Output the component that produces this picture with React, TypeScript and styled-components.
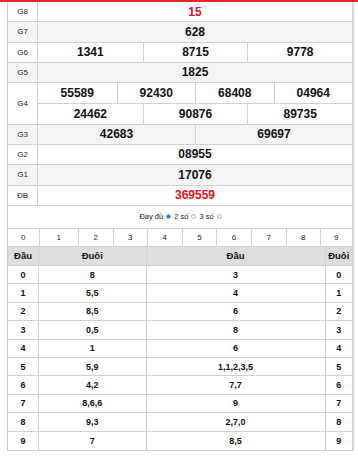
import React from "react";
import styled, { createGlobalStyle } from "styled-components";

const Global = createGlobalStyle`
  html, body { margin: 0; padding: 0; background: #fff; }
  body { font-family: "Liberation Sans", Arial, sans-serif; color: #111; }
`;

const TopBar = styled.div`
  height: 2px;
  background: #e8232a;
`;

const Box = styled.div`
  margin-left: 7px;
  width: 346px;
  box-sizing: border-box;
  border-left: 1px solid #cfcfcf;
  border-right: 1px solid #cfcfcf;
  border-bottom: 1px solid #cfcfcf;
  box-shadow: 1px 1px 2px rgba(0, 0, 0, 0.18);
`;

const PrizeRow = styled.div<{ $grey?: boolean; $h: number }>`
  display: grid;
  grid-template-columns: 30px 1fr;
  background: ${(p) => (p.$grey ? "#f4f4f4" : "#fff")};
  border-bottom: 1px solid #d2d2d2;
  height: ${(p) => p.$h}px;
  box-sizing: border-box;
`;

const Label = styled.div`
  display: flex;
  align-items: center;
  justify-content: center;
  border-right: 1px solid #d2d2d2;
  font-size: 8px;
  color: #222;
`;

const Lines = styled.div`
  display: flex;
  flex-direction: column;
`;

const Line = styled.div<{ $n: number; $top?: boolean }>`
  flex: 1;
  display: grid;
  grid-template-columns: repeat(${(p) => p.$n}, 1fr);
  border-top: ${(p) => (p.$top ? "1px solid #d2d2d2" : "none")};
`;

const Num = styled.div<{ $red?: boolean }>`
  display: flex;
  align-items: center;
  justify-content: center;
  font-size: 12px;
  font-weight: bold;
  color: ${(p) => (p.$red ? "#e8101c" : "#111")};
  & + & { border-left: 1px solid #d2d2d2; }
`;

const RadioRow = styled.div`
  height: 23px;
  display: flex;
  align-items: center;
  justify-content: center;
  font-size: 7.5px;
  color: #222;
  gap: 2px;
  padding-left: 2px;
  box-sizing: border-box;
  border-bottom: 1px solid #d2d2d2;
`;

const Radio = styled.span<{ $on?: boolean }>`
  display: inline-block;
  width: 5px;
  height: 5px;
  border-radius: 50%;
  box-sizing: border-box;
  border: 1px solid ${(p) => (p.$on ? "#7fb2ef" : "#aaa")};
  background: ${(p) => (p.$on ? "#1a73e8" : "#fff")};
  margin: 0 1px;
`;

const DigitRow = styled.div`
  display: grid;
  grid-template-columns: 30.7px 39px 35px 34px 35px 34.6px 34.4px 35px 34px 1fr;
  height: 18px;
  box-sizing: border-box;
  border-bottom: 1px solid #d2d2d2;
`;

const Digit = styled.div`
  display: flex;
  align-items: center;
  justify-content: center;
  font-size: 8px;
  color: #222;
  & + & { border-left: 1px solid #d2d2d2; }
`;

const LotoRow = styled.div<{ $head?: boolean }>`
  display: grid;
  grid-template-columns: 30px 107.5px 179px 1fr;
  height: ${(p) => (p.$head ? "19px" : "18.4px")};
  box-sizing: border-box;
  background: ${(p) => (p.$head ? "#dedede" : "#fff")};
  border-bottom: 1px solid #d2d2d2;
  &:last-child { border-bottom: none; }
`;

const LotoCell = styled.div<{ $head?: boolean }>`
  display: flex;
  align-items: center;
  justify-content: center;
  font-size: ${(p) => (p.$head ? "9.5px" : "9px")};
  font-weight: bold;
  color: #111;
  & + & { border-left: 1px solid ${(p) => (p.$head ? "#d0d0d0" : "#d2d2d2")}; }
`;

type Prize = { label: string; lines: string[][]; grey?: boolean; red?: boolean; h: number };

const prizes: Prize[] = [
  { label: "G8", lines: [["15"]], red: true, h: 20 },
  { label: "G7", lines: [["628"]], grey: true, h: 20.7 },
  { label: "G6", lines: [["1341", "8715", "9778"]], h: 20 },
  { label: "G5", lines: [["1825"]], grey: true, h: 20 },
  { label: "G4", lines: [["55589", "92430", "68408", "04964"], ["24462", "90876", "89735"]], h: 42 },
  { label: "G3", lines: [["42683", "69697"]], grey: true, h: 20.3 },
  { label: "G2", lines: [["08955"]], h: 20 },
  { label: "G1", lines: [["17076"]], grey: true, h: 21 },
  { label: "ĐB", lines: [["369559"]], red: true, h: 20 },
];

const loto: [string, string, string, string][] = [
  ["0", "8", "3", "0"],
  ["1", "5,5", "4", "1"],
  ["2", "8,5", "6", "2"],
  ["3", "0,5", "8", "3"],
  ["4", "1", "6", "4"],
  ["5", "5,9", "1,1,2,3,5", "5"],
  ["6", "4,2", "7,7", "6"],
  ["7", "8,6,6", "9", "7"],
  ["8", "9,3", "2,7,0", "8"],
  ["9", "7", "8,5", "9"],
];

export default function App() {
  return (
    <>
      <Global />
      <TopBar />
      <Box>
        {prizes.map((p) => (
          <PrizeRow key={p.label} $grey={p.grey} $h={p.h}>
            <Label>{p.label}</Label>
            <Lines>
              {p.lines.map((l, i) => (
                <Line key={i} $n={l.length} $top={i > 0}>
                  {l.map((n) => (
                    <Num key={n} $red={p.red}>{n}</Num>
                  ))}
                </Line>
              ))}
            </Lines>
          </PrizeRow>
        ))}
        <RadioRow>
          <span>Đầy đủ</span>
          <Radio $on />
          <span>2 số</span>
          <Radio />
          <span>3 số</span>
          <Radio />
        </RadioRow>
        <DigitRow>
          {Array.from({ length: 10 }, (_, i) => (
            <Digit key={i}>{i}</Digit>
          ))}
        </DigitRow>
        <LotoRow $head>
          <LotoCell $head>Đầu</LotoCell>
          <LotoCell $head>Đuôi</LotoCell>
          <LotoCell $head>Đầu</LotoCell>
          <LotoCell $head>Đuôi</LotoCell>
        </LotoRow>
        {loto.map((r) => (
          <LotoRow key={r[0]}>
            {r.map((c, j) => (
              <LotoCell key={j}>{c}</LotoCell>
            ))}
          </LotoRow>
        ))}
      </Box>
    </>
  );
}
